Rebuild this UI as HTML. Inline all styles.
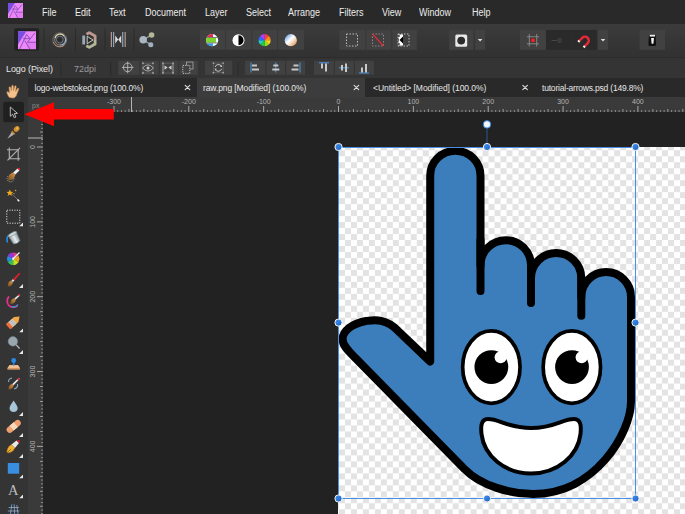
<!DOCTYPE html>
<html><head><meta charset="utf-8">
<style>
*{margin:0;padding:0;box-sizing:border-box}
html,body{width:685px;height:514px;overflow:hidden;background:#222222;font-family:"Liberation Sans",sans-serif;}
.a{position:absolute}
#menubar{left:0;top:0;width:685px;height:24px;background:#292929}
#menubar span{position:absolute;top:7px;font-size:10px;color:#ececec;white-space:nowrap;line-height:12px;transform:scaleX(0.9);transform-origin:0 0}
#toolbar{left:0;top:24px;width:685px;height:33px;background:linear-gradient(#3b3b3b 0px,#393939 9px,#363636 14px,#353535 22px,#333333 26px,#323232 33px)}
#ctx{left:0;top:57px;width:685px;height:21px;background:#343434;border-top:1px solid #2b2b2b}
#leftpanel{left:0;top:78px;width:28px;height:436px;background:#343434}
#tabs{left:28px;top:78px;width:657px;height:19px;background:#292929}
#hruler{left:28px;top:97px;width:657px;height:15px;background:#3a3a3a}
#vruler{left:28px;top:97px;width:15px;height:417px;background:#3a3a3a}
#canvas{left:43px;top:112px;width:642px;height:402px;background:#222222}
#doc{left:338px;top:147px;width:347px;height:367px;
  background-color:#ffffff;
  background-image:linear-gradient(45deg,#e2e2e2 25%,transparent 25%,transparent 75%,#e2e2e2 75%),linear-gradient(45deg,#e2e2e2 25%,transparent 25%,transparent 75%,#e2e2e2 75%);
  background-size:12px 12px;background-position:1px -3px,7px 3px;}
.tab{position:absolute;top:0;height:19px}
.tab span{position:absolute;top:5px;font-size:8.5px;color:#e6e6e6;white-space:nowrap;line-height:11px;letter-spacing:-0.05px}
.tab i{position:absolute;top:3px;font-style:normal;font-size:11px;color:#dddddd;line-height:12px}
.sep{position:absolute;width:1px;background:#232323}
.grp{position:absolute;background:#3b3b3b}
.dv{position:absolute;top:0;width:1px;height:100%;background:#2c2c2c}
</style></head><body>
<div id="menubar" class="a">
  
  <span style="left:42px">File</span>
  <span style="left:74.5px">Edit</span>
  <span style="left:109px">Text</span>
  <span style="left:144.5px">Document</span>
  <span style="left:205px">Layer</span>
  <span style="left:245.5px">Select</span>
  <span style="left:288px">Arrange</span>
  <span style="left:339px">Filters</span>
  <span style="left:382px">View</span>
  <span style="left:419px">Window</span>
  <span style="left:471.5px">Help</span>
</div>
<div id="toolbar" class="a"></div>
<div id="ctx" class="a"></div>
<div id="leftpanel" class="a"></div>
<svg class="a" style="left:0;top:78px" width="28" height="436" viewBox="0 78 28 436">
  <defs>
    <linearGradient id="brushg" x1="0" y1="1" x2="1" y2="0"><stop offset="0" stop-color="#7a4a1a"/><stop offset="1" stop-color="#d89a50"/></linearGradient>
    <linearGradient id="bucket" x1="0" y1="0" x2="1" y2="0"><stop offset="0" stop-color="#8a9aa0"/><stop offset="0.5" stop-color="#e8eef0"/><stop offset="1" stop-color="#7a8a90"/></linearGradient>
    <symbol id="tri" viewBox="0 0 4 4"><path d="M4 0 V4 H0 Z" fill="#e8e8e8"/></symbol>
  </defs>
  <!-- hand -->
  <path d="M9.5 97.5 C8 96 7 93.5 6.8 92 C7.5 91.3 8.5 92 9.5 93 L9 87.5 C9.2 86.6 10.4 86.6 10.6 87.5 L11.3 91 L11.8 85.8 C12 85 13.2 85 13.3 85.8 L13.5 91 L14.8 86.3 C15 85.5 16.2 85.7 16.2 86.5 L15.6 91.5 L17.5 88.5 C18 87.8 19 88.2 18.8 89 L16.5 95 C15.8 97 14.5 98 13 98 Z" fill="#f3c28c" stroke="#c98a52" stroke-width="0.6"/>
  <!-- move selected -->
  <rect x="3.2" y="101.8" width="20.8" height="20.5" rx="2.5" fill="#202020"/>
  <path d="M10.3 107 L10.3 116.3 L12.6 114.2 L14.3 117.8 L15.9 117 L14.3 113.6 L17.5 113.4 Z" fill="#1e1e1e" stroke="#c8c8c8" stroke-width="0.9" stroke-linejoin="round"/>
  <!-- color picker -->
  <path d="M7.4 138.8 L12 131.4 L14.6 134 Z" fill="#b0b0b0"/>
  <path d="M12.2 130.6 L15.4 133.8 L14.2 134.6 L11.4 131.8 Z" fill="#c8802a"/>
  <ellipse cx="16.6" cy="129" rx="3.2" ry="2.5" transform="rotate(-45 16.6 129)" fill="#d08e2c"/>
  <ellipse cx="17.2" cy="128.3" rx="1.6" ry="1.2" transform="rotate(-45 17.2 128.3)" fill="#eab048"/>
  <!-- crop -->
  <g stroke="#b4b4b4" stroke-width="1.1" fill="none">
    <path d="M9.3 147.5 V158.7 H20.3"/>
    <path d="M7 149.7 H18.2 V160.7"/>
    <path d="M7.5 160.3 L20 147.8"/>
  </g>
  <!-- selection brush -->
  <circle cx="10.5" cy="178.5" r="3.4" fill="none" stroke="#c0c0c0" stroke-width="0.8" stroke-dasharray="1 1"/>
  <path d="M8.2 180.5 C7.5 177 10 173 13.2 172.5 L15.3 174.6 C15 178 11.5 181 8.2 180.5 Z" fill="url(#brushg)"/>
  <path d="M13.2 172.5 L17.5 168.5 L19.5 170.5 L15.3 174.6 Z" fill="#eeeeee"/>
  <path d="M17.5 168.5 C18.5 167.5 19.8 167.7 20 168.5 C20.3 169.5 20 170 19.5 170.5 Z" fill="#e8202a"/>
  <!-- flood select -->
  <path d="M11.3 193 L18.8 200.8" stroke="#333" stroke-width="1.8"/>
  <path d="M11.3 193 L18.8 200.8" stroke="#a0a0a0" stroke-width="0.6"/>
  <path d="M17.5 199.5 L19.2 201.2" stroke="#f0f0f0" stroke-width="1.6"/>
  <path d="M9.8 189.5 L10.8 191.8 L13.2 192 L11.3 193.5 L12 196 L9.8 194.5 L7.6 196 L8.3 193.5 L6.5 192 L8.8 191.8 Z" fill="#f0a820"/>
  <circle cx="15.6" cy="190.5" r="0.8" fill="#f0a020"/>
  <circle cx="14" cy="193.5" r="0.6" fill="#f0c040"/>
  <!-- marquee -->
  <rect x="6.8" y="210.2" width="13" height="13" fill="none" stroke="#d8d8d8" stroke-width="1" stroke-dasharray="1.2 1.3"/>
  <use href="#tri" x="19" y="222.5" width="4" height="4"/>
  <!-- fill -->
  <path d="M10 235 C8 235.5 6.8 237.5 7 240 L7.3 242.5" stroke="#2a8ae0" stroke-width="1.7" fill="none"/>
  <g transform="rotate(-28 14.5 238)">
    <path d="M9.8 233.5 H19.2 L18.3 242.8 C16.5 244.2 12.5 244.2 10.7 242.8 Z" fill="url(#bucket)" stroke="#55606a" stroke-width="0.5"/>
    <ellipse cx="14.5" cy="233.6" rx="4.7" ry="1.6" fill="#d0d8dc" stroke="#6a7880" stroke-width="0.5"/>
  </g>
  <!-- gradient / color wheel -->
  <g transform="translate(13.2 258.8)">
    <path d="M0 0 L0 -6.2 A6.2 6.2 0 0 1 5.4 -3.1 Z" fill="#e83a8a"/>
    <path d="M0 0 L5.4 -3.1 A6.2 6.2 0 0 1 5.4 3.1 Z" fill="#f0a020"/>
    <path d="M0 0 L5.4 3.1 A6.2 6.2 0 0 1 0 6.2 Z" fill="#c8e020"/>
    <path d="M0 0 L0 6.2 A6.2 6.2 0 0 1 -5.4 3.1 Z" fill="#30c060"/>
    <path d="M0 0 L-5.4 3.1 A6.2 6.2 0 0 1 -5.4 -3.1 Z" fill="#2a8ae0"/>
    <path d="M0 0 L-5.4 -3.1 A6.2 6.2 0 0 1 0 -6.2 Z" fill="#8a3ae0"/>
  </g>
  <path d="M13.2 258.8 L19.5 252.5" stroke="#f0f0f0" stroke-width="1.3"/>
  <circle cx="13.2" cy="258.8" r="1.2" fill="#f0f0f0"/>
  <!-- paint brush -->
  <path d="M8 286.5 C7.2 283.5 9 281 11.5 280.5 L13 282 C12.5 284.5 10.5 286.7 8 286.5 Z" fill="url(#brushg)"/>
  <path d="M11.5 280.5 L13 279 L14.5 280.5 L13 282 Z" fill="#e0e0e0"/>
  <path d="M13 279 L19 273 C19.8 272.6 20.5 273.3 20 274 L14.5 280.5 Z" fill="#e02028"/>
  <use href="#tri" x="19" y="284" width="4" height="4"/>
  <!-- mixer brush -->
  <path d="M9 296.5 C6.5 299 6.5 303.5 9.5 306 C12 307.8 15.5 307.5 17.5 305.5" stroke="#e8308a" stroke-width="1.8" fill="none"/>
  <path d="M11.5 306.5 C14 307.5 16.5 306.5 18 304.5" stroke="#2aa0e0" stroke-width="1.2" fill="none"/>
  <path d="M10.5 304 C10 301 12 298.5 14.5 298.3 L15.8 299.6 C15.5 302.2 13.5 304.3 10.5 304 Z" fill="url(#brushg)"/>
  <path d="M14.5 298.3 L19 294.5 C19.7 294.2 20.3 294.8 20 295.5 L15.8 299.6 Z" fill="#e8e8e8"/>
  <path d="M18 295.2 L19.2 294.2 C19.8 293.9 20.4 294.4 20.1 295.2 L19 296.2 Z" fill="#e02028"/>
  <!-- eraser -->
  <g transform="rotate(-42 13.8 321.5)">
    <path d="M6.5 318.3 H17 L21.5 321.6 L17 324.9 H6.5 Z" fill="#f2a848"/>
    <rect x="9.3" y="318.3" width="5.2" height="6.6" fill="#cfcfcf"/>
    <path d="M10.5 318.3 V324.9 M12 318.3 V324.9 M13.3 318.3 V324.9" stroke="#9a9a9a" stroke-width="0.5"/>
    <rect x="6" y="318.3" width="3.3" height="6.6" rx="0.8" fill="#ee6a3a"/>
  </g>
  <use href="#tri" x="19" y="328.5" width="4" height="4"/>
  <!-- dodge -->
  <path d="M16 344.5 L19.6 348.6" stroke="#b0b8c0" stroke-width="1.3"/>
  <circle cx="12.9" cy="341.4" r="4.8" fill="#9aa6ae" stroke="#6a7680" stroke-width="0.5"/>
  <use href="#tri" x="19" y="350" width="4" height="4"/>
  <!-- clone stamp -->
  <path d="M7.5 368 L9.5 365 H18 L20 368 V369.6 H7.5 Z" fill="#f0c090"/>
  <rect x="7.5" y="368.3" width="12.5" height="0.8" fill="#d08040"/>
  <rect x="12.8" y="362" width="1.8" height="3.5" fill="#2a7ad0"/>
  <circle cx="13.7" cy="360.5" r="2.4" fill="#2a8ae8"/>
  <!-- undo brush -->
  <path d="M8.5 382 C8.5 379.5 10 378.3 12 378" stroke="#8aa8c0" stroke-width="1.1" fill="none"/>
  <path d="M17.5 384 C18 386.5 16.5 388.3 14 389" stroke="#8aa8c0" stroke-width="1.1" fill="none"/>
  <path d="M8.5 389.5 C8 386.8 9.8 384.3 12.3 384 L13.6 385.3 C13.2 387.8 11.2 389.8 8.5 389.5 Z" fill="url(#brushg)"/>
  <path d="M12.3 384 L18.5 378 C19.3 377.6 20 378.3 19.6 379 L13.6 385.3 Z" fill="#e8e8e8"/>
  <path d="M17 379.4 L18.5 378 C19.3 377.6 20 378.3 19.6 379 L18.3 380.6 Z" fill="#e02028"/>
  <!-- blur drop -->
  <path d="M13.6 400.6 C12 403.5 9.5 406 9.5 408.2 C9.5 410.5 11.3 412 13.6 412 C15.9 412 17.7 410.5 17.7 408.2 C17.7 406 15.2 403.5 13.6 400.6 Z" fill="#a8c4d8"/>
  <use href="#tri" x="19" y="412" width="4" height="4"/>
  <!-- healing -->
  <g transform="rotate(-40 13.6 426.5)">
    <rect x="5.5" y="423.3" width="16.5" height="6.4" rx="3.2" fill="#f0a070"/>
    <rect x="11" y="423.3" width="5.5" height="6.4" fill="#f8d8b8"/>
  </g>
  <use href="#tri" x="19" y="433" width="4" height="4"/>
  <!-- pen -->
  <path d="M7 453 C6.5 450 8 446 11.5 444.5 L15 448 C13.5 451.5 10 453.2 7 453 Z" fill="#f0b030" stroke="#8a5a10" stroke-width="0.5"/>
  <path d="M7 453 L11 449" stroke="#5a3a10" stroke-width="0.6"/>
  <path d="M11.5 444.5 L16.5 440.5 L19 443 L15 448 Z" fill="#e8e8e8"/>
  <path d="M16.5 440.5 C17.5 439.6 19.5 439.8 20 440.5 C20.3 441.5 19.8 442.2 19 443 Z" fill="#c02030"/>
  <use href="#tri" x="19" y="454" width="4" height="4"/>
  <!-- rectangle -->
  <rect x="7.8" y="463" width="11.4" height="10.7" fill="#3a8ee0"/>
  <use href="#tri" x="19" y="474.5" width="4" height="4"/>
  <!-- text -->
  <text x="13.2" y="495.2" text-anchor="middle" font-family="Liberation Serif" font-size="14.5" fill="#bdbdbd">A</text>
  <use href="#tri" x="19" y="494.5" width="4" height="4"/>
  <!-- mesh -->
  <path d="M9.6 504.3 H15.5 Q18.8 505.2 19.2 509 L19.6 514 H7.2 Z" fill="#28384c"/>
  <g stroke="#c0c8d0" stroke-width="0.6" fill="none"><path d="M8.6 507.5 H18.8 M7.8 511 H19.4 M11.8 504.3 L10.5 514 M14.2 504.3 L14.6 514 M16.8 505 L18 514"/></g>
</svg>

<svg class="a" style="left:0;top:0" width="685" height="78" viewBox="0 0 685 78">
  <defs>
    <linearGradient id="lg1" x1="0" y1="0" x2="1" y2="1"><stop offset="0" stop-color="#6a4be0"/><stop offset="0.45" stop-color="#b061ec"/><stop offset="0.5" stop-color="#e47ef5"/><stop offset="1" stop-color="#f090f8"/></linearGradient>
    <linearGradient id="wb" x1="0" y1="0" x2="1" y2="1"><stop offset="0" stop-color="#3f7fd8"/><stop offset="0.45" stop-color="#ffffff"/><stop offset="0.6" stop-color="#f4e4d4"/><stop offset="1" stop-color="#e07a2a"/></linearGradient>
    <symbol id="aplogo" viewBox="0 0 20 20">
      <rect x="0" y="0" width="20" height="20" fill="#ec88f8"/>
      <path d="M0 0 H9.3 L0 14.5 Z" fill="#7a4ee0"/>
      <path d="M10.5 12.2 H20 V20 H10.5 Z" fill="#e47cf2"/>
      <path d="M1.8 19.8 L9.6 3.6 L12.8 7.6 M5.6 8.2 H13.6 M7.6 10.5 L13.2 19.8 M18.8 1.8 L10.5 12.2 H20" stroke="#6a3aa8" stroke-width="0.8" fill="none"/>
    </symbol>
  </defs>
  <use href="#aplogo" x="8" y="3" width="15" height="15"/>
  <!-- persona selected -->
  <rect x="14.2" y="28.2" width="25" height="22.5" rx="2" fill="#222222"/>
  <use href="#aplogo" x="18" y="31" width="18" height="18.5"/>
  <g fill="#2a2a2a"><rect x="43.5" y="28.5" width="1" height="22.5"/><rect x="75" y="28.5" width="1" height="22.5"/><rect x="104.5" y="28.5" width="1" height="22.5"/><rect x="133.5" y="28.5" width="1" height="22.5"/></g>
  <!-- liquify -->
  <g fill="none">
    <circle cx="59.8" cy="39.8" r="7" stroke="#8e8078" stroke-width="0.7"/>
    <path d="M53.2 42 A7 7 0 0 0 64.5 45" stroke="#b89080" stroke-width="1"/>
    <path d="M55 38 A5.2 5.2 0 0 1 64.5 36.5" stroke="#d6d2b0" stroke-width="1.3"/>
    <path d="M64.5 36.5 A5.2 5.2 0 0 1 60 45" stroke="#9fb8c8" stroke-width="1.1"/>
    <path d="M60 45 A5.2 5.2 0 0 1 55 38" stroke="#a89888" stroke-width="0.8"/>
    <circle cx="59.8" cy="39.6" r="3.4" fill="#2d2d2d" stroke="#7a8a98" stroke-width="0.8"/>
  </g>
  <!-- develop -->
  <g fill="none" stroke-width="2.8" stroke-linejoin="round">
    <path d="M83.7 44.5 V35.5" stroke="#9aa8bc"/>
    <path d="M86.5 34.2 L89.3 32.6 L95.1 36 V40" stroke="#bc9a90"/>
    <path d="M95.1 40 V44 L89.3 47.4 L86.3 45.7" stroke="#b4b698"/>
  </g>
  <path d="M87.2 36.4 L93 40 L87.2 43.6 Z" fill="#2a2a2a" stroke="#d8d8c8" stroke-width="0.9"/>
  <!-- tone map -->
  <g>
    <rect x="110.8" y="32" width="1.1" height="15" fill="#c4a494"/>
    <rect x="113.1" y="32" width="1.1" height="15" fill="#98b0c8"/>
    <rect x="122.2" y="32" width="1.1" height="15" fill="#98b0c8"/>
    <rect x="124.6" y="32" width="1.1" height="15" fill="#c4a494"/>
    <path d="M115.2 35.5 L118.2 39.5 L121.2 35.5 V43.5 L118.2 39.5 L115.2 43.5 Z" fill="#dcdcdc"/>
  </g>
  <!-- share -->
  <g>
    <path d="M143.2 39.8 L151.6 35 M143.2 39.8 L150.8 44.8" stroke="#9aa4ae" stroke-width="1.3"/>
    <circle cx="143.2" cy="39.8" r="3.8" fill="#a9b6c2"/>
    <circle cx="151.6" cy="35" r="2.8" fill="#b4b896"/>
    <circle cx="150.8" cy="44.8" r="2.5" fill="#a3b0c0"/>
  </g>
  <!-- group 1 -->
  <rect x="200" y="30" width="104" height="19.7" fill="#414141"/>
  <g fill="#373737"><rect x="225" y="30" width="1" height="19.7"/><rect x="251.3" y="30" width="1" height="19.7"/><rect x="277.2" y="30" width="1" height="19.7"/></g>
  <g>
    <clipPath id="c1"><circle cx="212.1" cy="40.2" r="6.1"/></clipPath>
    <g clip-path="url(#c1)">
      <rect x="205" y="33" width="15" height="15" fill="#ffffff"/>
      <rect x="205" y="33" width="8" height="4" fill="#e8284a"/>
      <rect x="205" y="38" width="11" height="4.5" fill="#7ad628"/>
      <rect x="205" y="43.5" width="8" height="5" fill="#2f9ae8"/>
      <rect x="205" y="37.3" width="15" height="0.7" fill="#414141"/>
      <rect x="205" y="42.6" width="15" height="0.7" fill="#414141"/>
    </g>
    <circle cx="238.5" cy="40.2" r="6" fill="#ffffff"/>
    <path d="M238.5 35.2 A5 5 0 0 1 238.5 45.2 Z" fill="#000"/>
    <g transform="translate(264.6 40.2)">
      <path d="M0 0 L0 -6.1 A6.1 6.1 0 0 1 4.3 -4.3 Z" fill="#ff3a3a"/>
      <path d="M0 0 L4.3 -4.3 A6.1 6.1 0 0 1 6.1 0 Z" fill="#ff8a1a"/>
      <path d="M0 0 L6.1 0 A6.1 6.1 0 0 1 4.3 4.3 Z" fill="#ffd21a"/>
      <path d="M0 0 L4.3 4.3 A6.1 6.1 0 0 1 0 6.1 Z" fill="#9ae21a"/>
      <path d="M0 0 L0 6.1 A6.1 6.1 0 0 1 -4.3 4.3 Z" fill="#22cc44"/>
      <path d="M0 0 L-4.3 4.3 A6.1 6.1 0 0 1 -6.1 0 Z" fill="#1ad0c8"/>
      <path d="M0 0 L-6.1 0 A6.1 6.1 0 0 1 -4.3 -4.3 Z" fill="#2a6aff"/>
      <path d="M0 0 L-4.3 -4.3 A6.1 6.1 0 0 1 0 -6.1 Z" fill="#b43aff"/>
    </g>
    <circle cx="290.8" cy="40.2" r="6.1" fill="url(#wb)"/>
  </g>
  <!-- group 2 -->
  <rect x="339.4" y="30" width="77.4" height="19.8" fill="#414141"/>
  <g fill="#373737"><rect x="365.3" y="30" width="1" height="19.8"/><rect x="391.3" y="30" width="1" height="19.8"/></g>
  <g fill="none" stroke="#bdbdbd" stroke-width="1" stroke-dasharray="1.5 1.5">
    <rect x="346.5" y="34" width="11" height="12"/>
    <rect x="372.5" y="34" width="11" height="12" stroke="#8a8a8a"/>
    <rect x="398" y="34" width="11" height="12"/>
  </g>
  <path d="M372.5 34 L383.5 46" stroke="#e02a3a" stroke-width="1.3"/>
  <path d="M398.5 34.5 H403 V45.5 H398.5 Z" fill="#ffffff"/>
  <path d="M403 36.5 L399.5 40 L403 43.5 Z" fill="#000"/>
  <path d="M398 36 H400 M398 40 H399 M398 44 H400" stroke="#000" stroke-width="1"/>
  <!-- mask button -->
  <rect x="449.1" y="30" width="24.3" height="19.8" fill="#414141"/>
  <rect x="475.2" y="30" width="9.9" height="19.8" fill="#414141"/>
  <rect x="455.3" y="34.4" width="11.9" height="12.4" rx="1.5" fill="#e8e8e8"/>
  <circle cx="461.2" cy="40.6" r="3.9" fill="#2a2a2a"/>
  <path d="M477.8 39 H482.4 L480.1 41.6 Z" fill="#e0e0e0"/>
  <!-- group 3 -->
  <rect x="519.9" y="30" width="26" height="19.8" fill="#414141"/>
  <rect x="546" y="30" width="25.5" height="19.8" fill="#2a2a2a"/>
  <rect x="571.5" y="30" width="25.3" height="19.8" fill="#2a2a2a"/>
  <rect x="598" y="30" width="10" height="19.8" fill="#414141"/>
  <g stroke="#8c8c8c" stroke-width="0.9" fill="none">
    <path d="M529.3 34 V46.5 M536.7 34 V46.5 M527 36.8 H539 M527 43.8 H539"/>
  </g>
  <rect x="530.3" y="37.7" width="5.4" height="5.2" fill="#3c3c3c"/>
  <rect x="531.3" y="38.6" width="3.4" height="3.4" fill="#ff1c1c"/>
  <path d="M551.5 40.5 H557" stroke="#4a4a4a" stroke-width="0.9"/>
  <rect x="557.5" y="38" width="4" height="5" fill="#3a3a3a"/>
  <g transform="translate(585 40.5) rotate(45)">
    <path d="M-5 0 A5 5 0 0 1 5 0 V4.5 H2.6 V0 A2.6 2.6 0 0 0 -2.6 0 V4.5 H-5 Z" fill="#e8283a"/>
    <rect x="-5" y="4" width="2.4" height="1.8" fill="#f0f0e0"/>
    <rect x="2.6" y="4" width="2.4" height="1.8" fill="#f0f0e0"/>
  </g>
  <path d="M600.7 39 H605.3 L603 41.6 Z" fill="#e0e0e0"/>
  <!-- assistant -->
  <rect x="639.5" y="30" width="25.5" height="19.8" fill="#414141"/>
  <path d="M648.9 35.5 H655.6 L656.1 45.6 Q652.3 46.6 648.4 45.6 Z" fill="#101010"/>
  <path d="M649.8 34.8 H655 V36.6 H649.8 Z" fill="#e8e8e8"/><path d="M651.1 38 H654 L653.4 43.8 H651.6 Z" fill="#f4f4f4"/>
  <!-- context toolbar -->
  <text x="6" y="71.5" font-family="Liberation Sans" font-size="9" fill="#e8e8e8" letter-spacing="-0.1">Logo (Pixel)</text>
  <rect x="60.5" y="62.4" width="1" height="13.6" fill="#2a2a2a"/>
  <text x="74" y="71.5" font-family="Liberation Sans" font-size="9" fill="#9a9a9a">72dpi</text>
  <rect x="110.2" y="62.4" width="1" height="13.6" fill="#2a2a2a"/>
  <rect x="118.2" y="60.7" width="79.7" height="14.1" fill="#414141"/>
  <g fill="#343434"><rect x="139.4" y="60.7" width="1" height="14.1"/><rect x="158.8" y="60.7" width="1" height="14.1"/><rect x="178.3" y="60.7" width="1" height="14.1"/></g>
  <rect x="205" y="60.7" width="27.2" height="14.1" fill="#414141"/>
  <rect x="237.5" y="62.4" width="1" height="13.6" fill="#2a2a2a"/>
  <rect x="245.1" y="60.7" width="59.9" height="14.1" fill="#414141"/>
  <g fill="#343434"><rect x="265.3" y="60.7" width="1" height="14.1"/><rect x="285.2" y="60.7" width="1" height="14.1"/></g>
  <rect x="314" y="60.7" width="59.9" height="14.1" fill="#414141"/>
  <g fill="#343434"><rect x="333.8" y="60.7" width="1" height="14.1"/><rect x="353.8" y="60.7" width="1" height="14.1"/></g>
  <g fill="none" stroke="#c4c4c4" stroke-width="0.8">
    <circle cx="127.7" cy="67.4" r="4.3"/>
    <path d="M127.7 61.6 V73.2 M121.9 67.4 H133.5"/>
    <rect x="143" y="63.2" width="10" height="9.8" stroke="#6a6a6a" stroke-width="0.6"/>
    <path d="M142.6 68 Q148 61.8 153.4 68 Q148 74.2 142.6 68 Z"/>
    <rect x="163" y="63.2" width="10" height="9.8" stroke="#6a6a6a" stroke-width="0.6"/>
    <path d="M163 63.2 V73 M173 63.2 V73" stroke="#a8a8a8"/>
    <rect x="186.5" y="62" width="6.5" height="7" stroke="#a8a8a8"/>
    <rect x="213.4" y="63.1" width="9.7" height="9.6" stroke="#6a6a6a" stroke-width="0.6"/>
    <path d="M215.2 67 A3.4 3.4 0 0 1 221.4 66.2 M221.6 68.8 A3.4 3.4 0 0 1 215.4 69.6" stroke-width="1"/>
  </g>
  <rect x="182.8" y="65.4" width="7" height="8" fill="#414141" stroke="#d0d0d0" stroke-width="0.9" stroke-dasharray="1.2 1.1"/>
  <circle cx="148" cy="68" r="1.5" fill="#cfcfcf"/>
  <path d="M164.5 65.5 L167.6 67.6 L164.5 69.7 Z M171.5 65.5 L168.4 67.6 L171.5 69.7 Z" fill="#d0d0d0"/>
  <path d="M221.8 64.8 L222 67 L219.8 66.8 Z M215 71 L214.8 68.6 L217 68.8 Z" fill="#c4c4c4"/>
  <g fill="#a4a4a4">
    <circle cx="143" cy="63.2" r="0.9"/><circle cx="153" cy="63.2" r="0.9"/><circle cx="143" cy="73" r="0.9"/><circle cx="153" cy="73" r="0.9"/>
    <circle cx="163" cy="63.2" r="0.9"/><circle cx="173" cy="63.2" r="0.9"/><circle cx="163" cy="73" r="0.9"/><circle cx="173" cy="73" r="0.9"/>
    <circle cx="213.4" cy="63.1" r="0.9"/><circle cx="223.1" cy="63.1" r="0.9"/><circle cx="213.4" cy="72.7" r="0.9"/><circle cx="223.1" cy="72.7" r="0.9"/>
  </g>
  <!-- align icons -->
  <g>
    <rect x="250.5" y="62.5" width="1" height="10" fill="#4a9ae8"/>
    <rect x="252" y="64.5" width="5" height="2" fill="#c8c8c8"/><rect x="252" y="68.5" width="7" height="2" fill="#c8c8c8"/>
    <rect x="275.3" y="62.5" width="1" height="10" fill="#4a9ae8"/>
    <rect x="273.3" y="64.5" width="5" height="2" fill="#c8c8c8"/><rect x="272.3" y="68.5" width="7" height="2" fill="#c8c8c8"/>
    <rect x="299.5" y="62.5" width="1" height="10" fill="#4a9ae8"/>
    <rect x="293.5" y="64.5" width="5" height="2" fill="#c8c8c8"/><rect x="291.5" y="68.5" width="7" height="2" fill="#c8c8c8"/>
    <rect x="319" y="62.3" width="10" height="1" fill="#4a9ae8"/>
    <rect x="321" y="63.5" width="2" height="5" fill="#c8c8c8"/><rect x="325" y="63.5" width="2" height="8" fill="#c8c8c8"/>
    <rect x="339" y="67.3" width="10" height="1" fill="#4a9ae8"/>
    <rect x="341" y="65" width="2" height="5.5" fill="#c8c8c8"/><rect x="345" y="63.5" width="2" height="8.5" fill="#c8c8c8"/>
    <rect x="359" y="72.5" width="10" height="1" fill="#4a9ae8"/>
    <rect x="361" y="67.5" width="2" height="5" fill="#c8c8c8"/><rect x="365" y="64" width="2" height="8.5" fill="#c8c8c8"/>
  </g>
</svg>

<div id="tabs" class="a">
  <div class="tab" style="left:0;width:169px;background:#292929"><span style="left:6.5px;letter-spacing:-0.16px">logo-webstoked.png (100.0%)</span></div>
  <div class="tab" style="left:169px;width:168px;background:#3c3c3c"><span style="left:6px;letter-spacing:-0.1px">raw.png [Modified] (100.0%)</span></div>
  <div class="tab" style="left:337px;width:169px;background:#292929"><span style="left:8px">&lt;Untitled&gt; [Modified] (100.0%)</span></div>
  <div class="tab" style="left:506px;width:151px;background:#292929"><span style="left:8px;letter-spacing:-0.2px">tutorial-arrows.psd (149.8%)</span></div>
</div>
<svg class="a" style="left:0;top:0" width="685" height="100" viewBox="0 0 685 100"><g stroke="#e0e0e0" stroke-width="1.1" stroke-linecap="round"><path d="M185.2 85.3 L189.8 89.7 M189.8 85.3 L185.2 89.7"/><path d="M354.09999999999997 85.3 L358.7 89.7 M358.7 85.3 L354.09999999999997 89.7"/><path d="M522.8000000000001 85.3 L527.4 89.7 M527.4 85.3 L522.8000000000001 89.7"/></g></svg>
<div id="hruler" class="a"></div>
<div id="vruler" class="a"></div>
<div id="canvas" class="a"></div>
<svg class="a" style="left:0;top:0" width="685" height="514" viewBox="0 0 685 514"><g font-family="Liberation Sans" font-size="7" fill="#b4b4b4"><rect x="46.09" y="110" width="1" height="2" fill="#8a8a8a"/><rect x="49.83" y="110" width="1" height="2" fill="#8a8a8a"/><rect x="53.57" y="109" width="1" height="3" fill="#9a9a9a"/><rect x="57.31" y="110" width="1" height="2" fill="#8a8a8a"/><rect x="61.06" y="110" width="1" height="2" fill="#8a8a8a"/><rect x="64.80" y="110" width="1" height="2" fill="#8a8a8a"/><rect x="68.54" y="109" width="1" height="3" fill="#9a9a9a"/><rect x="72.28" y="110" width="1" height="2" fill="#8a8a8a"/><rect x="76.03" y="110" width="1" height="2" fill="#8a8a8a"/><rect x="79.77" y="110" width="1" height="2" fill="#8a8a8a"/><rect x="83.51" y="109" width="1" height="3" fill="#9a9a9a"/><rect x="87.25" y="110" width="1" height="2" fill="#8a8a8a"/><rect x="91.00" y="110" width="1" height="2" fill="#8a8a8a"/><rect x="94.74" y="110" width="1" height="2" fill="#8a8a8a"/><rect x="98.48" y="109" width="1" height="3" fill="#9a9a9a"/><rect x="102.22" y="110" width="1" height="2" fill="#8a8a8a"/><rect x="105.97" y="110" width="1" height="2" fill="#8a8a8a"/><rect x="109.71" y="110" width="1" height="2" fill="#8a8a8a"/><rect x="113.45" y="106" width="1" height="6" fill="#a8a8a8"/><text x="113.95" y="104" text-anchor="middle">-300</text><rect x="117.19" y="110" width="1" height="2" fill="#8a8a8a"/><rect x="120.94" y="110" width="1" height="2" fill="#8a8a8a"/><rect x="124.68" y="110" width="1" height="2" fill="#8a8a8a"/><rect x="128.42" y="109" width="1" height="3" fill="#9a9a9a"/><rect x="132.16" y="110" width="1" height="2" fill="#8a8a8a"/><rect x="135.91" y="110" width="1" height="2" fill="#8a8a8a"/><rect x="139.65" y="110" width="1" height="2" fill="#8a8a8a"/><rect x="143.39" y="109" width="1" height="3" fill="#9a9a9a"/><rect x="147.13" y="110" width="1" height="2" fill="#8a8a8a"/><rect x="150.88" y="110" width="1" height="2" fill="#8a8a8a"/><rect x="154.62" y="110" width="1" height="2" fill="#8a8a8a"/><rect x="158.36" y="109" width="1" height="3" fill="#9a9a9a"/><rect x="162.10" y="110" width="1" height="2" fill="#8a8a8a"/><rect x="165.85" y="110" width="1" height="2" fill="#8a8a8a"/><rect x="169.59" y="110" width="1" height="2" fill="#8a8a8a"/><rect x="173.33" y="109" width="1" height="3" fill="#9a9a9a"/><rect x="177.07" y="110" width="1" height="2" fill="#8a8a8a"/><rect x="180.81" y="110" width="1" height="2" fill="#8a8a8a"/><rect x="184.56" y="110" width="1" height="2" fill="#8a8a8a"/><rect x="188.30" y="106" width="1" height="6" fill="#a8a8a8"/><text x="188.80" y="104" text-anchor="middle">-200</text><rect x="192.04" y="110" width="1" height="2" fill="#8a8a8a"/><rect x="195.79" y="110" width="1" height="2" fill="#8a8a8a"/><rect x="199.53" y="110" width="1" height="2" fill="#8a8a8a"/><rect x="203.27" y="109" width="1" height="3" fill="#9a9a9a"/><rect x="207.01" y="110" width="1" height="2" fill="#8a8a8a"/><rect x="210.75" y="110" width="1" height="2" fill="#8a8a8a"/><rect x="214.50" y="110" width="1" height="2" fill="#8a8a8a"/><rect x="218.24" y="109" width="1" height="3" fill="#9a9a9a"/><rect x="221.98" y="110" width="1" height="2" fill="#8a8a8a"/><rect x="225.73" y="110" width="1" height="2" fill="#8a8a8a"/><rect x="229.47" y="110" width="1" height="2" fill="#8a8a8a"/><rect x="233.21" y="109" width="1" height="3" fill="#9a9a9a"/><rect x="236.95" y="110" width="1" height="2" fill="#8a8a8a"/><rect x="240.69" y="110" width="1" height="2" fill="#8a8a8a"/><rect x="244.44" y="110" width="1" height="2" fill="#8a8a8a"/><rect x="248.18" y="109" width="1" height="3" fill="#9a9a9a"/><rect x="251.92" y="110" width="1" height="2" fill="#8a8a8a"/><rect x="255.67" y="110" width="1" height="2" fill="#8a8a8a"/><rect x="259.41" y="110" width="1" height="2" fill="#8a8a8a"/><rect x="263.15" y="106" width="1" height="6" fill="#a8a8a8"/><text x="263.65" y="104" text-anchor="middle">-100</text><rect x="266.89" y="110" width="1" height="2" fill="#8a8a8a"/><rect x="270.63" y="110" width="1" height="2" fill="#8a8a8a"/><rect x="274.38" y="110" width="1" height="2" fill="#8a8a8a"/><rect x="278.12" y="109" width="1" height="3" fill="#9a9a9a"/><rect x="281.86" y="110" width="1" height="2" fill="#8a8a8a"/><rect x="285.61" y="110" width="1" height="2" fill="#8a8a8a"/><rect x="289.35" y="110" width="1" height="2" fill="#8a8a8a"/><rect x="293.09" y="109" width="1" height="3" fill="#9a9a9a"/><rect x="296.83" y="110" width="1" height="2" fill="#8a8a8a"/><rect x="300.57" y="110" width="1" height="2" fill="#8a8a8a"/><rect x="304.32" y="110" width="1" height="2" fill="#8a8a8a"/><rect x="308.06" y="109" width="1" height="3" fill="#9a9a9a"/><rect x="311.80" y="110" width="1" height="2" fill="#8a8a8a"/><rect x="315.55" y="110" width="1" height="2" fill="#8a8a8a"/><rect x="319.29" y="110" width="1" height="2" fill="#8a8a8a"/><rect x="323.03" y="109" width="1" height="3" fill="#9a9a9a"/><rect x="326.77" y="110" width="1" height="2" fill="#8a8a8a"/><rect x="330.51" y="110" width="1" height="2" fill="#8a8a8a"/><rect x="334.26" y="110" width="1" height="2" fill="#8a8a8a"/><rect x="338.00" y="106" width="1" height="6" fill="#a8a8a8"/><text x="338.50" y="104" text-anchor="middle">0</text><rect x="341.74" y="110" width="1" height="2" fill="#8a8a8a"/><rect x="345.49" y="110" width="1" height="2" fill="#8a8a8a"/><rect x="349.23" y="110" width="1" height="2" fill="#8a8a8a"/><rect x="352.97" y="109" width="1" height="3" fill="#9a9a9a"/><rect x="356.71" y="110" width="1" height="2" fill="#8a8a8a"/><rect x="360.45" y="110" width="1" height="2" fill="#8a8a8a"/><rect x="364.20" y="110" width="1" height="2" fill="#8a8a8a"/><rect x="367.94" y="109" width="1" height="3" fill="#9a9a9a"/><rect x="371.68" y="110" width="1" height="2" fill="#8a8a8a"/><rect x="375.43" y="110" width="1" height="2" fill="#8a8a8a"/><rect x="379.17" y="110" width="1" height="2" fill="#8a8a8a"/><rect x="382.91" y="109" width="1" height="3" fill="#9a9a9a"/><rect x="386.65" y="110" width="1" height="2" fill="#8a8a8a"/><rect x="390.39" y="110" width="1" height="2" fill="#8a8a8a"/><rect x="394.14" y="110" width="1" height="2" fill="#8a8a8a"/><rect x="397.88" y="109" width="1" height="3" fill="#9a9a9a"/><rect x="401.62" y="110" width="1" height="2" fill="#8a8a8a"/><rect x="405.37" y="110" width="1" height="2" fill="#8a8a8a"/><rect x="409.11" y="110" width="1" height="2" fill="#8a8a8a"/><rect x="412.85" y="106" width="1" height="6" fill="#a8a8a8"/><text x="413.35" y="104" text-anchor="middle">100</text><rect x="416.59" y="110" width="1" height="2" fill="#8a8a8a"/><rect x="420.33" y="110" width="1" height="2" fill="#8a8a8a"/><rect x="424.08" y="110" width="1" height="2" fill="#8a8a8a"/><rect x="427.82" y="109" width="1" height="3" fill="#9a9a9a"/><rect x="431.56" y="110" width="1" height="2" fill="#8a8a8a"/><rect x="435.31" y="110" width="1" height="2" fill="#8a8a8a"/><rect x="439.05" y="110" width="1" height="2" fill="#8a8a8a"/><rect x="442.79" y="109" width="1" height="3" fill="#9a9a9a"/><rect x="446.53" y="110" width="1" height="2" fill="#8a8a8a"/><rect x="450.27" y="110" width="1" height="2" fill="#8a8a8a"/><rect x="454.02" y="110" width="1" height="2" fill="#8a8a8a"/><rect x="457.76" y="109" width="1" height="3" fill="#9a9a9a"/><rect x="461.50" y="110" width="1" height="2" fill="#8a8a8a"/><rect x="465.25" y="110" width="1" height="2" fill="#8a8a8a"/><rect x="468.99" y="110" width="1" height="2" fill="#8a8a8a"/><rect x="472.73" y="109" width="1" height="3" fill="#9a9a9a"/><rect x="476.47" y="110" width="1" height="2" fill="#8a8a8a"/><rect x="480.21" y="110" width="1" height="2" fill="#8a8a8a"/><rect x="483.96" y="110" width="1" height="2" fill="#8a8a8a"/><rect x="487.70" y="106" width="1" height="6" fill="#a8a8a8"/><text x="488.20" y="104" text-anchor="middle">200</text><rect x="491.44" y="110" width="1" height="2" fill="#8a8a8a"/><rect x="495.19" y="110" width="1" height="2" fill="#8a8a8a"/><rect x="498.93" y="110" width="1" height="2" fill="#8a8a8a"/><rect x="502.67" y="109" width="1" height="3" fill="#9a9a9a"/><rect x="506.41" y="110" width="1" height="2" fill="#8a8a8a"/><rect x="510.15" y="110" width="1" height="2" fill="#8a8a8a"/><rect x="513.90" y="110" width="1" height="2" fill="#8a8a8a"/><rect x="517.64" y="109" width="1" height="3" fill="#9a9a9a"/><rect x="521.38" y="110" width="1" height="2" fill="#8a8a8a"/><rect x="525.12" y="110" width="1" height="2" fill="#8a8a8a"/><rect x="528.87" y="110" width="1" height="2" fill="#8a8a8a"/><rect x="532.61" y="109" width="1" height="3" fill="#9a9a9a"/><rect x="536.35" y="110" width="1" height="2" fill="#8a8a8a"/><rect x="540.10" y="110" width="1" height="2" fill="#8a8a8a"/><rect x="543.84" y="110" width="1" height="2" fill="#8a8a8a"/><rect x="547.58" y="109" width="1" height="3" fill="#9a9a9a"/><rect x="551.32" y="110" width="1" height="2" fill="#8a8a8a"/><rect x="555.07" y="110" width="1" height="2" fill="#8a8a8a"/><rect x="558.81" y="110" width="1" height="2" fill="#8a8a8a"/><rect x="562.55" y="106" width="1" height="6" fill="#a8a8a8"/><text x="563.05" y="104" text-anchor="middle">300</text><rect x="566.29" y="110" width="1" height="2" fill="#8a8a8a"/><rect x="570.03" y="110" width="1" height="2" fill="#8a8a8a"/><rect x="573.78" y="110" width="1" height="2" fill="#8a8a8a"/><rect x="577.52" y="109" width="1" height="3" fill="#9a9a9a"/><rect x="581.26" y="110" width="1" height="2" fill="#8a8a8a"/><rect x="585.00" y="110" width="1" height="2" fill="#8a8a8a"/><rect x="588.75" y="110" width="1" height="2" fill="#8a8a8a"/><rect x="592.49" y="109" width="1" height="3" fill="#9a9a9a"/><rect x="596.23" y="110" width="1" height="2" fill="#8a8a8a"/><rect x="599.97" y="110" width="1" height="2" fill="#8a8a8a"/><rect x="603.72" y="110" width="1" height="2" fill="#8a8a8a"/><rect x="607.46" y="109" width="1" height="3" fill="#9a9a9a"/><rect x="611.20" y="110" width="1" height="2" fill="#8a8a8a"/><rect x="614.94" y="110" width="1" height="2" fill="#8a8a8a"/><rect x="618.69" y="110" width="1" height="2" fill="#8a8a8a"/><rect x="622.43" y="109" width="1" height="3" fill="#9a9a9a"/><rect x="626.17" y="110" width="1" height="2" fill="#8a8a8a"/><rect x="629.91" y="110" width="1" height="2" fill="#8a8a8a"/><rect x="633.66" y="110" width="1" height="2" fill="#8a8a8a"/><rect x="637.40" y="106" width="1" height="6" fill="#a8a8a8"/><text x="637.90" y="104" text-anchor="middle">400</text><rect x="641.14" y="110" width="1" height="2" fill="#8a8a8a"/><rect x="644.88" y="110" width="1" height="2" fill="#8a8a8a"/><rect x="648.63" y="110" width="1" height="2" fill="#8a8a8a"/><rect x="652.37" y="109" width="1" height="3" fill="#9a9a9a"/><rect x="656.11" y="110" width="1" height="2" fill="#8a8a8a"/><rect x="659.86" y="110" width="1" height="2" fill="#8a8a8a"/><rect x="663.60" y="110" width="1" height="2" fill="#8a8a8a"/><rect x="667.34" y="109" width="1" height="3" fill="#9a9a9a"/><rect x="671.08" y="110" width="1" height="2" fill="#8a8a8a"/><rect x="674.83" y="110" width="1" height="2" fill="#8a8a8a"/><rect x="678.57" y="110" width="1" height="2" fill="#8a8a8a"/><rect x="682.31" y="109" width="1" height="3" fill="#9a9a9a"/><rect x="41" y="112.82" width="2" height="1" fill="#8a8a8a"/><rect x="40" y="116.56" width="3" height="1" fill="#9a9a9a"/><rect x="41" y="120.30" width="2" height="1" fill="#8a8a8a"/><rect x="41" y="124.05" width="2" height="1" fill="#8a8a8a"/><rect x="41" y="127.79" width="2" height="1" fill="#8a8a8a"/><rect x="40" y="131.53" width="3" height="1" fill="#9a9a9a"/><rect x="41" y="135.27" width="2" height="1" fill="#8a8a8a"/><rect x="41" y="139.01" width="2" height="1" fill="#8a8a8a"/><rect x="41" y="142.76" width="2" height="1" fill="#8a8a8a"/><rect x="37" y="146.50" width="6" height="1" fill="#a8a8a8"/><text transform="translate(35 147.00) rotate(-90)" text-anchor="middle">0</text><rect x="41" y="150.24" width="2" height="1" fill="#8a8a8a"/><rect x="41" y="153.99" width="2" height="1" fill="#8a8a8a"/><rect x="41" y="157.73" width="2" height="1" fill="#8a8a8a"/><rect x="40" y="161.47" width="3" height="1" fill="#9a9a9a"/><rect x="41" y="165.21" width="2" height="1" fill="#8a8a8a"/><rect x="41" y="168.95" width="2" height="1" fill="#8a8a8a"/><rect x="41" y="172.70" width="2" height="1" fill="#8a8a8a"/><rect x="40" y="176.44" width="3" height="1" fill="#9a9a9a"/><rect x="41" y="180.18" width="2" height="1" fill="#8a8a8a"/><rect x="41" y="183.93" width="2" height="1" fill="#8a8a8a"/><rect x="41" y="187.67" width="2" height="1" fill="#8a8a8a"/><rect x="40" y="191.41" width="3" height="1" fill="#9a9a9a"/><rect x="41" y="195.15" width="2" height="1" fill="#8a8a8a"/><rect x="41" y="198.89" width="2" height="1" fill="#8a8a8a"/><rect x="41" y="202.64" width="2" height="1" fill="#8a8a8a"/><rect x="40" y="206.38" width="3" height="1" fill="#9a9a9a"/><rect x="41" y="210.12" width="2" height="1" fill="#8a8a8a"/><rect x="41" y="213.87" width="2" height="1" fill="#8a8a8a"/><rect x="41" y="217.61" width="2" height="1" fill="#8a8a8a"/><rect x="37" y="221.35" width="6" height="1" fill="#a8a8a8"/><text transform="translate(35 221.85) rotate(-90)" text-anchor="middle">100</text><rect x="41" y="225.09" width="2" height="1" fill="#8a8a8a"/><rect x="41" y="228.83" width="2" height="1" fill="#8a8a8a"/><rect x="41" y="232.58" width="2" height="1" fill="#8a8a8a"/><rect x="40" y="236.32" width="3" height="1" fill="#9a9a9a"/><rect x="41" y="240.06" width="2" height="1" fill="#8a8a8a"/><rect x="41" y="243.81" width="2" height="1" fill="#8a8a8a"/><rect x="41" y="247.55" width="2" height="1" fill="#8a8a8a"/><rect x="40" y="251.29" width="3" height="1" fill="#9a9a9a"/><rect x="41" y="255.03" width="2" height="1" fill="#8a8a8a"/><rect x="41" y="258.77" width="2" height="1" fill="#8a8a8a"/><rect x="41" y="262.52" width="2" height="1" fill="#8a8a8a"/><rect x="40" y="266.26" width="3" height="1" fill="#9a9a9a"/><rect x="41" y="270.00" width="2" height="1" fill="#8a8a8a"/><rect x="41" y="273.75" width="2" height="1" fill="#8a8a8a"/><rect x="41" y="277.49" width="2" height="1" fill="#8a8a8a"/><rect x="40" y="281.23" width="3" height="1" fill="#9a9a9a"/><rect x="41" y="284.97" width="2" height="1" fill="#8a8a8a"/><rect x="41" y="288.71" width="2" height="1" fill="#8a8a8a"/><rect x="41" y="292.46" width="2" height="1" fill="#8a8a8a"/><rect x="37" y="296.20" width="6" height="1" fill="#a8a8a8"/><text transform="translate(35 296.70) rotate(-90)" text-anchor="middle">200</text><rect x="41" y="299.94" width="2" height="1" fill="#8a8a8a"/><rect x="41" y="303.69" width="2" height="1" fill="#8a8a8a"/><rect x="41" y="307.43" width="2" height="1" fill="#8a8a8a"/><rect x="40" y="311.17" width="3" height="1" fill="#9a9a9a"/><rect x="41" y="314.91" width="2" height="1" fill="#8a8a8a"/><rect x="41" y="318.65" width="2" height="1" fill="#8a8a8a"/><rect x="41" y="322.40" width="2" height="1" fill="#8a8a8a"/><rect x="40" y="326.14" width="3" height="1" fill="#9a9a9a"/><rect x="41" y="329.88" width="2" height="1" fill="#8a8a8a"/><rect x="41" y="333.62" width="2" height="1" fill="#8a8a8a"/><rect x="41" y="337.37" width="2" height="1" fill="#8a8a8a"/><rect x="40" y="341.11" width="3" height="1" fill="#9a9a9a"/><rect x="41" y="344.85" width="2" height="1" fill="#8a8a8a"/><rect x="41" y="348.59" width="2" height="1" fill="#8a8a8a"/><rect x="41" y="352.34" width="2" height="1" fill="#8a8a8a"/><rect x="40" y="356.08" width="3" height="1" fill="#9a9a9a"/><rect x="41" y="359.82" width="2" height="1" fill="#8a8a8a"/><rect x="41" y="363.56" width="2" height="1" fill="#8a8a8a"/><rect x="41" y="367.31" width="2" height="1" fill="#8a8a8a"/><rect x="37" y="371.05" width="6" height="1" fill="#a8a8a8"/><text transform="translate(35 371.55) rotate(-90)" text-anchor="middle">300</text><rect x="41" y="374.79" width="2" height="1" fill="#8a8a8a"/><rect x="41" y="378.53" width="2" height="1" fill="#8a8a8a"/><rect x="41" y="382.28" width="2" height="1" fill="#8a8a8a"/><rect x="40" y="386.02" width="3" height="1" fill="#9a9a9a"/><rect x="41" y="389.76" width="2" height="1" fill="#8a8a8a"/><rect x="41" y="393.50" width="2" height="1" fill="#8a8a8a"/><rect x="41" y="397.25" width="2" height="1" fill="#8a8a8a"/><rect x="40" y="400.99" width="3" height="1" fill="#9a9a9a"/><rect x="41" y="404.73" width="2" height="1" fill="#8a8a8a"/><rect x="41" y="408.47" width="2" height="1" fill="#8a8a8a"/><rect x="41" y="412.22" width="2" height="1" fill="#8a8a8a"/><rect x="40" y="415.96" width="3" height="1" fill="#9a9a9a"/><rect x="41" y="419.70" width="2" height="1" fill="#8a8a8a"/><rect x="41" y="423.44" width="2" height="1" fill="#8a8a8a"/><rect x="41" y="427.19" width="2" height="1" fill="#8a8a8a"/><rect x="40" y="430.93" width="3" height="1" fill="#9a9a9a"/><rect x="41" y="434.67" width="2" height="1" fill="#8a8a8a"/><rect x="41" y="438.41" width="2" height="1" fill="#8a8a8a"/><rect x="41" y="442.16" width="2" height="1" fill="#8a8a8a"/><rect x="37" y="445.90" width="6" height="1" fill="#a8a8a8"/><text transform="translate(35 446.40) rotate(-90)" text-anchor="middle">400</text><rect x="41" y="449.64" width="2" height="1" fill="#8a8a8a"/><rect x="41" y="453.38" width="2" height="1" fill="#8a8a8a"/><rect x="41" y="457.13" width="2" height="1" fill="#8a8a8a"/><rect x="40" y="460.87" width="3" height="1" fill="#9a9a9a"/><rect x="41" y="464.61" width="2" height="1" fill="#8a8a8a"/><rect x="41" y="468.35" width="2" height="1" fill="#8a8a8a"/><rect x="41" y="472.10" width="2" height="1" fill="#8a8a8a"/><rect x="40" y="475.84" width="3" height="1" fill="#9a9a9a"/><rect x="41" y="479.58" width="2" height="1" fill="#8a8a8a"/><rect x="41" y="483.32" width="2" height="1" fill="#8a8a8a"/><rect x="41" y="487.07" width="2" height="1" fill="#8a8a8a"/><rect x="40" y="490.81" width="3" height="1" fill="#9a9a9a"/><rect x="41" y="494.55" width="2" height="1" fill="#8a8a8a"/><rect x="41" y="498.29" width="2" height="1" fill="#8a8a8a"/><rect x="41" y="502.04" width="2" height="1" fill="#8a8a8a"/><rect x="40" y="505.78" width="3" height="1" fill="#9a9a9a"/><rect x="41" y="509.52" width="2" height="1" fill="#8a8a8a"/><rect x="41" y="513.26" width="2" height="1" fill="#8a8a8a"/></g><rect x="131" y="97" width="1" height="15" fill="#b5b5b5"/><rect x="28" y="137.5" width="15" height="1" fill="#b5b5b5"/><text x="32" y="108" font-family="Liberation Sans" font-size="7" fill="#8c8c8c">px</text></svg>
<svg class="a" style="left:0;top:0" width="685" height="514" viewBox="0 0 685 514"><defs><pattern id="chk" patternUnits="userSpaceOnUse" x="339" y="144.28" width="11.966" height="11.966"><rect x="0" y="0" width="11.966" height="11.966" fill="#ffffff"/><rect x="5.983" y="0" width="5.983" height="5.983" fill="#e3e3e3"/><rect x="0" y="5.983" width="5.983" height="5.983" fill="#e3e3e3"/></pattern></defs><rect x="338" y="147" width="347" height="367" fill="url(#chk)"/></svg>
<svg class="a" style="left:0;top:0" width="685" height="514" viewBox="0 0 685 514">
  <g id="hand">
    <path d="M356 358.6 C349 351.5 342.5 346 342.6 339 C342.8 331 352 323.5 366 321 C374 320 386 318 398 330.8 L430.2 361.5 L430.2 175.8 A25.15 25.15 0 0 1 480.5 175.8 L480.5 265.4 A25.25 25.25 0 0 1 531 265.4 L531 278.15 A25.15 25.15 0 0 1 581.3 278.15 L581.3 296.95 A24.85 24.85 0 0 1 631 296.95 L631 401.41 C631 432.17 595.7 494 533.06 494 C510.91 494 481.09 485.94 464.38 468.93 Z" fill="#3c7ebb" stroke="#000" stroke-width="8" stroke-linejoin="round"/>
    <path d="M480.5 240 L480.5 291 M531 265 L531 303 M581.3 278 L581.3 315.8" stroke="#000" stroke-width="8" stroke-linecap="round" fill="none"/>
    <ellipse cx="491.35" cy="367.1" rx="28.7" ry="36.2" fill="#fff" stroke="#000" stroke-width="3.7"/>
    <ellipse cx="571.85" cy="367.1" rx="28.7" ry="36.2" fill="#fff" stroke="#000" stroke-width="3.7"/>
    <circle cx="491.35" cy="367.05" r="16.9" fill="#000"/>
    <circle cx="572" cy="367.05" r="16.9" fill="#000"/>
    <circle cx="500.6" cy="357.3" r="6" fill="#fff"/>
    <circle cx="581.6" cy="357.3" r="6" fill="#fff"/>
    <path d="M531 428 C555 428 562 419 574 419 C582 419 581 429 580.5 434 C578 456 557 473.5 531 473.5 C505 473.5 484 456 481.5 434 C481 429 480 419 488 419 C500 419 507 428 531 428 Z" fill="#fff" stroke="#000" stroke-width="4"/>
  </g>
  <defs><linearGradient id="hg" x1="0" y1="0" x2="1" y2="1"><stop offset="0" stop-color="#4a94ee"/><stop offset="1" stop-color="#155fc4"/></linearGradient></defs>
  <g id="sel" fill="url(#hg)" stroke="#f4f4f4" stroke-width="1">
    <rect x="338.5" y="147.5" width="297" height="351" fill="none" stroke="#4a90e2" stroke-width="1"/>
    <line x1="487" y1="127" x2="487" y2="144" stroke="#2c5f9e" stroke-width="0.9"/>
    <circle cx="338.5" cy="147" r="3.6"/>
    <circle cx="487" cy="147" r="3.6"/>
    <circle cx="635.5" cy="147" r="3.6"/>
    <circle cx="338.5" cy="322.6" r="3.6"/>
    <circle cx="635.5" cy="322.6" r="3.6"/>
    <circle cx="338.5" cy="498.5" r="3.6"/>
    <circle cx="487" cy="498.5" r="3.6"/>
    <circle cx="635.5" cy="498.5" r="3.6"/>
    <circle cx="487" cy="124.4" r="3.6" fill="#f2f7ff" stroke="#3a86e0" stroke-width="1.1"/>
  </g>
  <g id="arrow"><path d="M24.3 114.3 L54 102.2 L54 109.1 L113.8 109.1 L113.8 119.4 L54 119.4 L54 126.3 Z" fill="#ff0000"/></g>
</svg>
</body></html>
